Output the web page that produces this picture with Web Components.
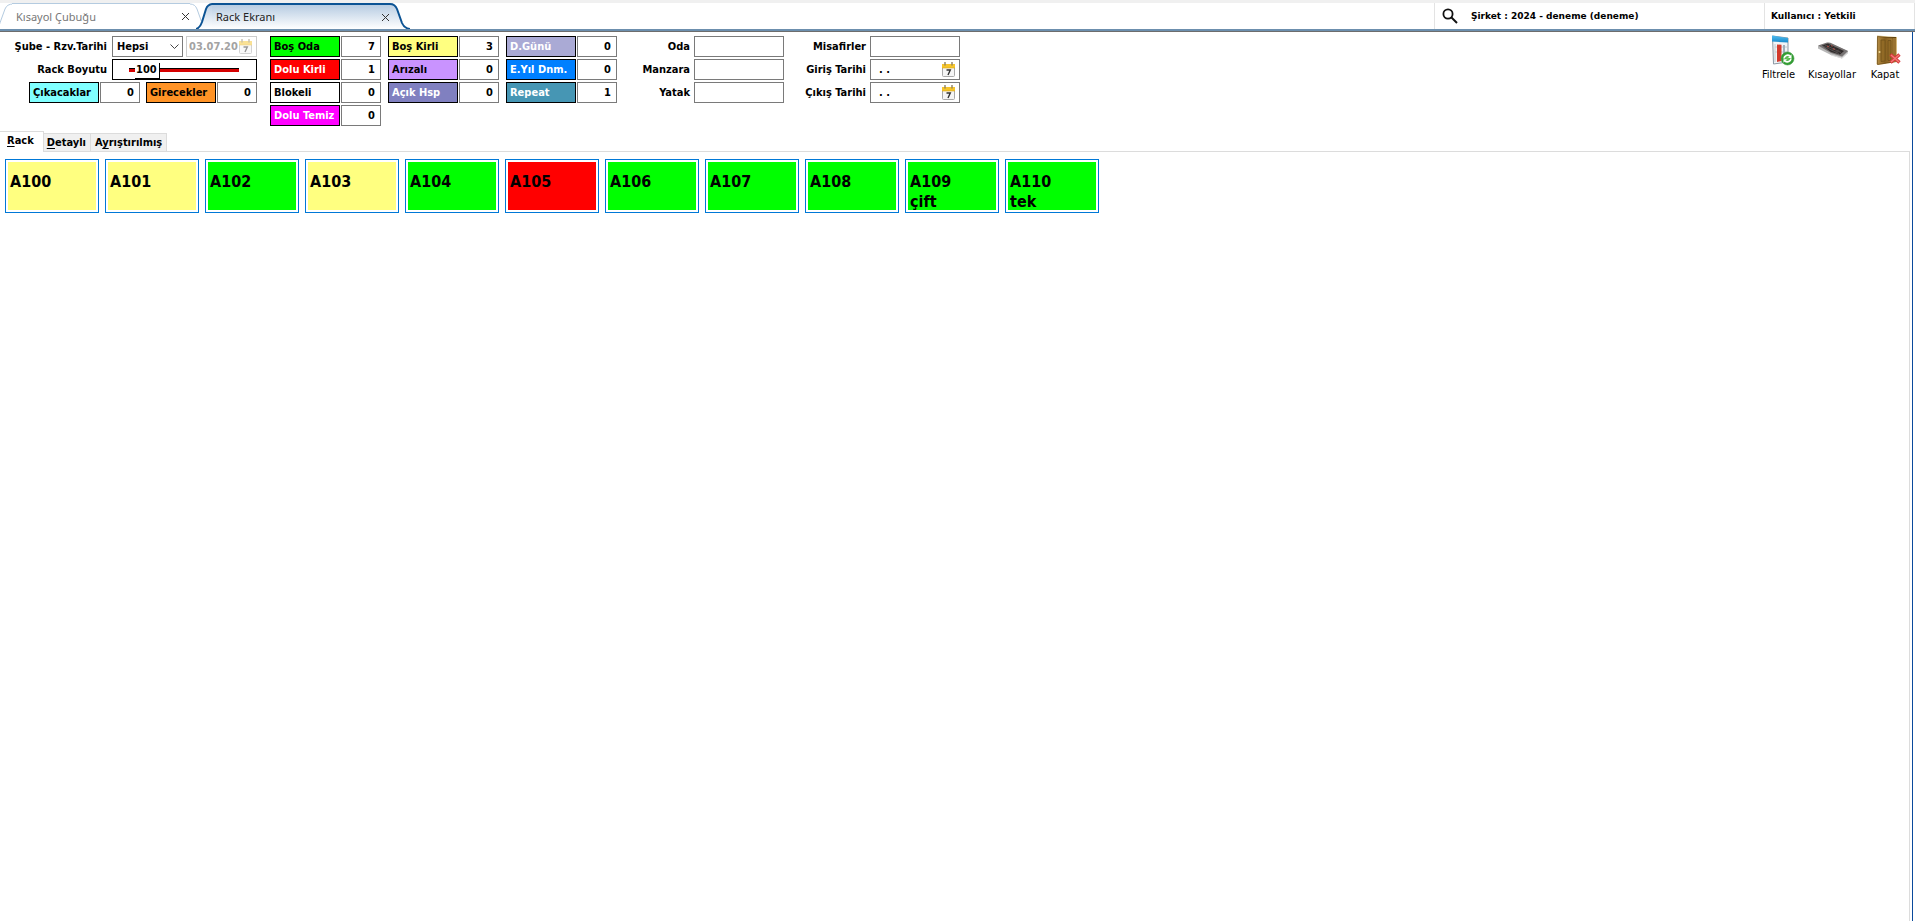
<!DOCTYPE html>
<html lang="tr">
<head>
<meta charset="utf-8">
<title>Rack Ekranı</title>
<style>
  :root {
    --ui: "DejaVu Sans Condensed", "DejaVu Sans", sans-serif;
    --wide: "DejaVu Sans", sans-serif;
    --tab: "Noto Sans", "Open Sans", sans-serif;
    --line: #7a7a7a;
    --soft-line: #dcdcdc;
    --accent: #0078d7;
  }
  body { margin: 0; background: #fff; color: #000; font: bold 11px/14px var(--ui); }
</style>
</head>
<body>
<rack-screen></rack-screen>

<script>
/* small helper: every component keeps its markup and style in an open shadow root */
class Base extends HTMLElement {
  constructor() {
    super();
    this.attachShadow({ mode: 'open' });
  }
  connectedCallback() {
    this.shadowRoot.innerHTML = this.view();
  }
  attr(name, fallback = '') {
    return this.getAttribute(name) ?? fallback;
  }
}

/* document tab with slanted sides: left cap, stretching middle, right cap */
class DocTab extends Base {
  view() {
    const on = this.hasAttribute('active');
    const stroke = on ? '#0b5394' : '#b4cbe0';
    const w = on ? 2 : 1;
    const top = on ? '#b7cce2' : '#ffffff';
    const grad = `<defs><linearGradient id="g" x1="0" y1="0" x2="0" y2="26" gradientUnits="userSpaceOnUse">
      <stop offset="0" stop-color="${top}"/><stop offset="1" stop-color="#fff"/></linearGradient></defs>`;
    const left = on ? 'M0 26C4 25 5 22 6 19L10 6Q12 1 17 1' : 'M0 26C3 24 4 20 5 17L9 6Q11 1 17 1';
    return `
      <style>
        :host { display: flex; width: 214px; height: 26px; margin-left: -14px; position: relative; }
        :host(:first-child) { margin-left: -4px; }
        :host([active]) { z-index: 1; }
        svg { flex: none; display: block; }
        .mid {
          flex: 1; display: flex; align-items: center; justify-content: space-between;
          box-sizing: border-box; padding-left: 4px;
          border-top: ${w}px solid ${stroke};
          background: linear-gradient(${top}, #fff);
        }
        a { font: 11px/16px var(--tab); color: ${on ? '#222' : '#777'}; text-decoration: none; white-space: nowrap; }
        button { width: 9px; height: 9px; padding: 0; border: 0; background: none; display: flex; }
      </style>
      <svg width="16" height="26" aria-hidden="true">${grad}
        <path d="${left}V26Z" fill="url(#g)"/><path d="${left}" fill="none" stroke="${stroke}" stroke-width="${w}"/>
      </svg>
      <div class="mid">
        <a href="#"><slot></slot></a>
        <button aria-label="Kapat"><svg width="9" height="9"><path d="M1 1L8 8M8 1L1 8" stroke="#333"/></svg></button>
      </div>
      <svg width="20" height="26" aria-hidden="true">${grad}
        <path d="M0 1Q5 1 7 6L12 20Q14 25 20 26H0Z" fill="url(#g)"/>
        <path d="M-1 1H0Q5 1 7 6L12 20Q14 25 20 26" fill="none" stroke="${stroke}" stroke-width="${w}"/>
      </svg>`;
  }
}

/* top strip: open documents on the left, company and user on the right */
class TitleBar extends Base {
  view() {
    return `
      <style>
        :host {
          display: flex; height: 26px; border-top: 3px solid #f0f0f0;
          border-bottom: 2px solid #6c8fae; box-shadow: 0 1px #6d6d6d; margin-bottom: 1px;
        }
        nav { display: flex; flex: 1; }
        .info {
          display: flex; align-items: center; box-sizing: border-box;
          border-left: 1px solid #e3e3e3; font: bold 9px/12px var(--wide); white-space: nowrap;
        }
        .company { width: 330px; padding-left: 7px; gap: 13px; }
        .user { width: 151px; padding-left: 6px; border-right: 1px solid #e3e3e3; }
        button { padding: 0; border: 0; background: none; display: flex; }
      </style>
      <nav><slot></slot></nav>
      <div class="info company">
        <button aria-label="Ara"><svg width="16" height="16" viewBox="0 0 16 16" fill="none" stroke="#111">
          <circle cx="6" cy="6" r="4.6" stroke-width="1.8"/><path d="M9.5 9.5L15 15" stroke-width="2"/></svg></button>
        <span>${this.attr('company')}</span>
      </div>
      <div class="info user">${this.attr('user')}</div>`;
  }
}

/* coloured caption with a read-only counter */
class StatusCount extends Base {
  view() {
    return `
      <style>
        :host { display: flex; gap: 1px; width: 111px; height: 21px; }
        label {
          width: 70px; box-sizing: border-box; border: 1px solid #000; padding: 3px 0 2px 3px;
          background: ${this.attr('fill', '#fff')}; color: ${this.attr('ink', '#000')}; white-space: nowrap;
        }
        input {
          width: 40px; box-sizing: border-box; border: 1px solid var(--line); padding: 0 5px 0 0;
          font: inherit; text-align: right; background: #fff; color: #000;
        }
      </style>
      <label for="n"><slot></slot></label>
      <input id="n" readonly value="${this.attr('count', '0')}">`;
  }
}

const calendar = `
  <svg width="13" height="15" viewBox="0 0 13 15" aria-hidden="true">
    <rect x=".5" y="2.5" width="12" height="12" rx="1" fill="#f5f5f5" stroke="#a9a9a9"/>
    <path d="M0 2H13V6H0Z" fill="#f6c52b"/><path d="M0 6H13" stroke="#d9a514" stroke-width=".6"/>
    <path d="M3 0V3.5M10 0V3.5" stroke="#8f8260" stroke-width="1.4"/>
    <path d="M4.5 8H8.3L6 13" fill="none" stroke="#333" stroke-width="1.4"/>
  </svg>`;

/* right-aligned caption followed by a 90px text or date editor */
class FormField extends Base {
  view() {
    const date = this.hasAttribute('date');
    return `
      <style>
        :host { display: flex; align-items: center; gap: 4px; height: 21px; }
        label { flex: 1; text-align: right; white-space: nowrap; }
        .box { display: flex; align-items: center; width: 90px; height: 21px; box-sizing: border-box;
          border: 1px solid var(--line); padding: 0 4px 0 ${date ? 8 : 4}px; }
        input { flex: 1; min-width: 0; border: 0; padding: 0; font: inherit; color: #000; outline: 0; }
        button { padding: 0; border: 0; background: none; display: flex; }
      </style>
      <label for="f">${this.attr('label')}</label>
      <div class="box">
        <input id="f" value="${date ? '. .' : ''}">
        ${date ? `<button aria-label="Takvim">${calendar}</button>` : ''}
      </div>`;
  }
}

/* branch drop-down with the locked reservation date beside it */
class BranchDate extends Base {
  view() {
    return `
      <style>
        :host { display: flex; align-items: center; justify-content: flex-end; height: 21px; white-space: nowrap; }
        label { margin-right: 5px; }
        .pick { width: 71px; height: 21px; position: relative; margin-right: 3px; }
        select { width: 100%; height: 100%; appearance: none; box-sizing: border-box; border: 1px solid var(--line);
          border-radius: 0; background: #fff; padding: 0 0 0 4px; font: inherit; color: #000; }
        .pick svg { position: absolute; right: 4px; top: 8px; pointer-events: none; }
        .date { display: flex; align-items: center; width: 71px; height: 21px; box-sizing: border-box;
          border: 1px solid #ccc; padding: 0 4px 0 2px; }
        input { flex: 1; min-width: 0; border: 0; padding: 0; font: inherit; color: #a3a3a3; background: none; }
        button { padding: 0; border: 0; background: none; display: flex; opacity: .5; }
      </style>
      <label for="s">Şube - Rzv.Tarihi</label>
      <div class="pick">
        <select id="s"><option>Hepsi</option></select>
        <svg width="9" height="6"><path d="M.5 .5L4.5 4.5L8.5 .5" fill="none" stroke="#444"/></svg>
      </div>
      <div class="date">
        <input aria-label="Rzv.Tarihi" value="03.07.20" disabled>
        <button aria-label="Takvim" disabled>${calendar}</button>
      </div>`;
  }
}

class SizeSlider extends Base {
  view() {
    return `
      <style>
        :host { display: flex; align-items: center; justify-content: flex-end; gap: 5px; height: 21px; white-space: nowrap; }
        .box { display: flex; align-items: center; width: 145px; height: 21px; box-sizing: border-box;
          border: 1px solid #000; padding: 0 17px 0 16px; position: relative; }
        input { appearance: none; width: 100%; height: 16px; margin: 0; background: none; }
        input::-webkit-slider-runnable-track { height: 4px; background: #d60000; border-top: 1px solid #000; box-sizing: border-box; }
        input::-webkit-slider-thumb { appearance: none; box-sizing: border-box; width: 25px; height: 16px; margin-top: -6px;
          background: #fff; border: solid #000; border-width: 0 1px 1px 0; border-radius: 0; }
        output { position: absolute; left: 23px; top: 3px; pointer-events: none; }
      </style>
      <label for="r">Rack Boyutu</label>
      <div class="box">
        <input id="r" type="range" min="50" max="750" value="100">
        <output for="r">100</output>
      </div>`;
  }
}

const toolIcons = {
  filter: `
    <defs><linearGradient id="b" x2="0" y2="1"><stop stop-color="#52bdf0"/><stop offset="1" stop-color="#188acb"/></linearGradient>
    <radialGradient id="gr"><stop stop-color="#6cc95e"/><stop offset="1" stop-color="#25912a"/></radialGradient></defs>
    <path d="M10.500 2L26 4V28L11.500 30Z" fill="#f2f5f7" stroke="#8b98a3" stroke-width="1"/>
    <path d="M10 1.500L26 4V8.500L10 7.500Z" fill="url(#b)"/>
    <path d="M13 10V28M13 13H25M13 18H25" stroke="#c3ccd2"/>
    <path d="M15 10.500L19.500 10.800V27L15 28Z" fill="#d33a2c"/>
    <path d="M22 11V20" stroke="#9fb0bc" stroke-width="2"/>
    <circle cx="25.500" cy="24.500" r="6.500" fill="url(#gr)" stroke="#45a345" stroke-width=".6"/>
    <path d="M22 24.500A3.700 3.700 0 0 1 28 22M29 24.500A3.700 3.700 0 0 1 23 27" fill="none" stroke="#fff" stroke-width="1.700"/>
    <path d="M29.500 20.300V24H26ZM21.500 28.800V25.300H25Z" fill="#fff"/>`,
  keyboard: `
    <path d="M2 12L11 9Q14 8.500 16 10L32 17V19L26 24.500L15 21L2 14.500Z" fill="#b8b8b8"/>
    <path d="M2 11.500L11 8.500Q14 8 16 9.500L32 17L26 22.500L15 19Z" fill="#777373"/>
    <path d="M6 11.500L12 9.500L28 17L24 20.500L15 18Z" fill="#2f2b2b"/>
    <path d="M9 11L25 18.500M7 12L23 19.500M11 13.500L14 11M16 16.500L19 13.500M20 18.500L23 15.500" stroke="#6c6564" stroke-width=".6"/>
    <path d="M11 12L13 13M17 14.500L19 15.500M15 11.500L16.500 12.300" stroke="#b44a43"/>
    <path d="M15 21L26 24L32 18.500" stroke="#ddd" fill="none"/>`,
  door: `
    <defs><linearGradient id="d"><stop stop-color="#b28a42"/><stop offset=".5" stop-color="#87601f"/><stop offset="1" stop-color="#a57d36"/></linearGradient></defs>
    <path d="M8 1.500L28 3V28L9 31L7.500 30Z" fill="#d6ba7d"/>
    <path d="M9 3H27V28L9 30Z" fill="#60430f"/>
    <path d="M8.500 2.500L24 4V28L8.500 30.500Z" fill="url(#d)" stroke="#6b4a17" stroke-width=".7"/>
    <path d="M24 4H27V28H24Z" fill="#997230"/>
    <path d="M12 6H16V27L12 27.500ZM19 6.500H22V26.500H19Z" fill="#916a26" stroke="#70501b" stroke-width=".8"/>
    <circle cx="10.500" cy="18" r="1" fill="#f0dc9b"/>
    <path d="M21.500 20.500L30.500 28.500M30.500 20.500L21.500 28.500" stroke="#d8393b" stroke-width="3.400"/>
    <path d="M22 21L30 28M30 21L22 28" stroke="#f27c78" stroke-width="1.300"/>`
};

/* icon over caption */
class ToolButton extends Base {
  view() {
    return `
      <style>
        button { display: flex; flex-direction: column; align-items: center; gap: 2px; padding: 0; border: 0;
          background: none; font: 11px/14px var(--ui); color: #000; }
        svg { display: block; overflow: visible; }
      </style>
      <button><svg width="32" height="32" viewBox="0 0 32 32" aria-hidden="true">${toolIcons[this.attr('icon')]}</svg><slot></slot></button>`;
  }
}

/* one room in the rack */
class RoomCard extends Base {
  view() {
    return `
      <style>
        :host { display: block; width: 94px; height: 54px; box-sizing: border-box; border: 1px solid var(--accent); padding: 2px; }
        div { height: 100%; box-sizing: border-box; overflow: hidden; padding: 10px 0 0 2px;
          background: ${this.attr('fill', '#00ff00')}; font: bold 16px/20px var(--ui); white-space: pre-line; }
      </style>
      <div><slot></slot></div>`;
  }
}

/* Rack / Detaylı / Ayrıştırılmış page control */
class RackPages extends Base {
  view() {
    return `
      <style>
        :host { display: flex; flex-direction: column; flex: 1; }
        nav { display: flex; align-items: flex-end; height: 20px; }
        a { box-sizing: border-box; height: 18px; padding: 2px 4px 0 3px; color: inherit; text-decoration: none; white-space: nowrap;
          background: #f0f0f0; border: solid var(--soft-line); border-width: 1px 1px 0 0; }
        a + a + a { padding-left: 4px; }
        a.on { height: 21px; padding: 2px 9px 0 7px; margin-bottom: -1px; background: #fff; position: relative; }
        u { text-underline-offset: 2px; }
        section { flex: 1; display: flex; flex-wrap: wrap; align-content: flex-start; gap: 6px; padding: 7px 5px;
          border: solid var(--soft-line); border-width: 1px 1px 0 0; margin-right: 2px; }
      </style>
      <nav>
        <a class="on" href="#"><u>R</u>ack</a><a href="#"><u>D</u>etaylı</a><a href="#">A<u>y</u>rıştırılmış</a>
      </nav>
      <section><slot></slot></section>`;
  }
}

class RackScreen extends Base {
  view() {
    const rooms = [
      ['A100', '#ffff80'], ['A101', '#ffff80'], ['A102', '#00ff00'], ['A103', '#ffff80'],
      ['A104', '#00ff00'], ['A105', '#ff0000'], ['A106', '#00ff00'], ['A107', '#00ff00'],
      ['A108', '#00ff00'], ['A109\nçift', '#00ff00'], ['A110\ntek', '#00ff00']
    ];
    return `
      <style>
        :host { display: flex; flex-direction: column; min-height: 100vh; }
        main { flex: 1; display: flex; flex-direction: column; border-right: 1px solid #0a4a9c; margin-right: 2px; }
        header { display: flex; align-items: flex-start; padding: 4px 11px 5px 0; }
        .col { display: flex; flex-direction: column; gap: 2px; }
        .first { width: 257px; margin-right: 13px; }
        .row { display: flex; justify-content: flex-end; gap: 6px; }
        .counts { display: flex; gap: 7px; }
        .room { width: 167px; }
        .guest { width: 176px; }
        .tools { display: flex; gap: 13px; margin: -2px 0 0 auto; }
      </style>
      <title-bar company="Şirket : 2024 - deneme (deneme)" user="Kullanıcı : Yetkili">
        <doc-tab>Kısayol Çubuğu</doc-tab>
        <doc-tab active>Rack Ekranı</doc-tab>
      </title-bar>
      <main>
        <header>
          <div class="col first">
            <branch-date></branch-date>
            <size-slider></size-slider>
            <div class="row"><status-count fill="#80ffff">Çıkacaklar</status-count><status-count fill="#ff9326">Girecekler</status-count></div>
          </div>
          <div class="counts">
            <div class="col">
              <status-count fill="#00ff00" count="7">Boş Oda</status-count>
              <status-count fill="#ff0000" ink="#fff" count="1">Dolu Kirli</status-count>
              <status-count>Blokeli</status-count>
              <status-count fill="#ff00ff" ink="#fff">Dolu Temiz</status-count>
            </div>
            <div class="col">
              <status-count fill="#ffff80" count="3">Boş Kirli</status-count>
              <status-count fill="#c993ff">Arızalı</status-count>
              <status-count fill="#8080c0" ink="#fff">Açık Hsp</status-count>
            </div>
            <div class="col">
              <status-count fill="#aaaad5" ink="#fff">D.Günü</status-count>
              <status-count fill="#0080ff" ink="#fff">E.Yıl Dnm.</status-count>
              <status-count fill="#4696b4" ink="#fff" count="1">Repeat</status-count>
            </div>
          </div>
          <div class="col room">
            <form-field label="Oda"></form-field>
            <form-field label="Manzara"></form-field>
            <form-field label="Yatak"></form-field>
          </div>
          <div class="col guest">
            <form-field label="Misafirler"></form-field>
            <form-field label="Giriş Tarihi" date></form-field>
            <form-field label="Çıkış Tarihi" date></form-field>
          </div>
          <div class="tools">
            <tool-button icon="filter">Filtrele</tool-button>
            <tool-button icon="keyboard">Kısayollar</tool-button>
            <tool-button icon="door">Kapat</tool-button>
          </div>
        </header>
        <rack-pages>
          ${rooms.map(([name, fill]) => `<room-card fill="${fill}">${name}</room-card>`).join('')}
        </rack-pages>
      </main>`;
  }
}

customElements.define('doc-tab', DocTab);
customElements.define('title-bar', TitleBar);
customElements.define('status-count', StatusCount);
customElements.define('form-field', FormField);
customElements.define('branch-date', BranchDate);
customElements.define('size-slider', SizeSlider);
customElements.define('tool-button', ToolButton);
customElements.define('room-card', RoomCard);
customElements.define('rack-pages', RackPages);
customElements.define('rack-screen', RackScreen);
</script>
</body>
</html>
